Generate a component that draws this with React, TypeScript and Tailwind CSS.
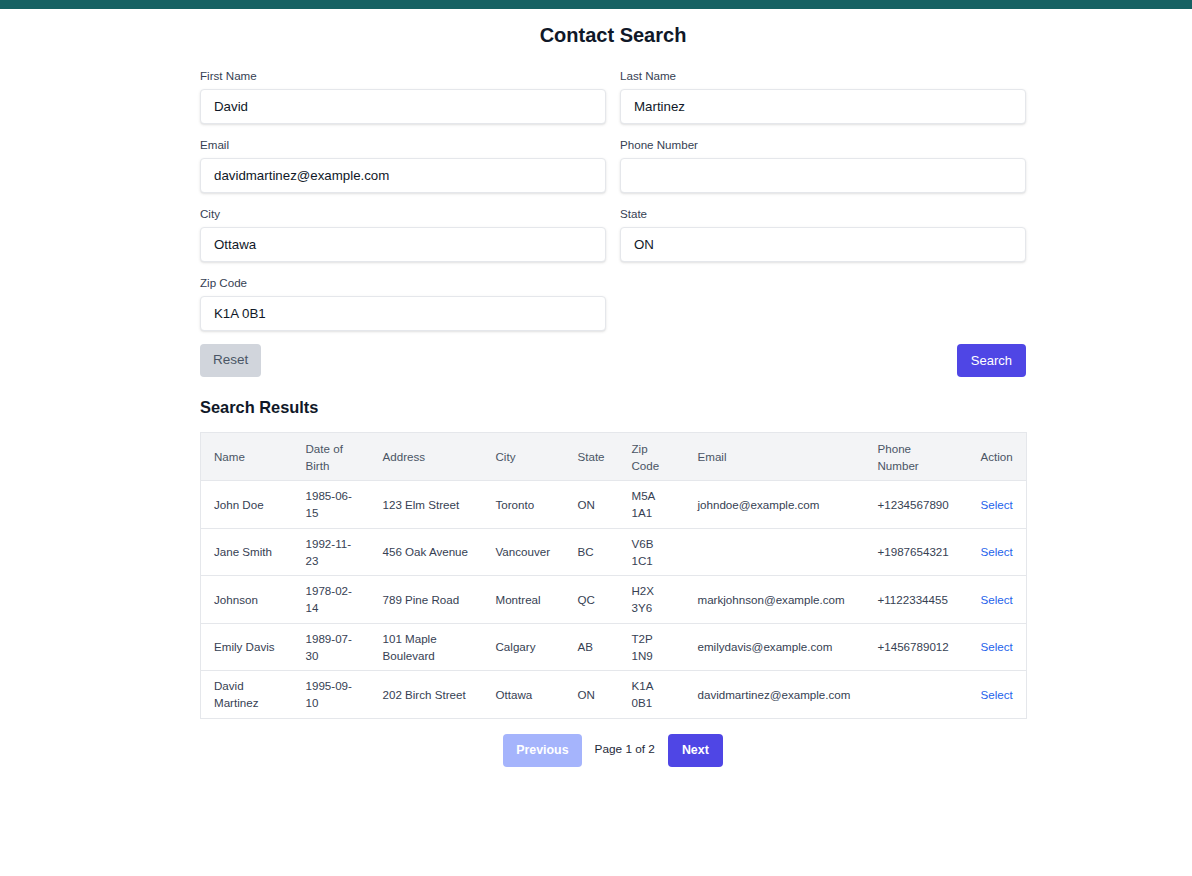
import { useState } from "react";

type Contact = {
  name: string;
  dob: string;
  address: string;
  city: string;
  state: string;
  zip: string;
  email: string;
  phone: string;
};

const contacts: Contact[] = [
  { name: "John Doe", dob: "1985-06-15", address: "123 Elm Street", city: "Toronto", state: "ON", zip: "M5A 1A1", email: "johndoe@example.com", phone: "+1234567890" },
  { name: "Jane Smith", dob: "1992-11-23", address: "456 Oak Avenue", city: "Vancouver", state: "BC", zip: "V6B 1C1", email: "", phone: "+1987654321" },
  { name: "Johnson", dob: "1978-02-14", address: "789 Pine Road", city: "Montreal", state: "QC", zip: "H2X 3Y6", email: "markjohnson@example.com", phone: "+1122334455" },
  { name: "Emily Davis", dob: "1989-07-30", address: "101 Maple Boulevard", city: "Calgary", state: "AB", zip: "T2P 1N9", email: "emilydavis@example.com", phone: "+1456789012" },
  { name: "David Martinez", dob: "1995-09-10", address: "202 Birch Street", city: "Ottawa", state: "ON", zip: "K1A 0B1", email: "davidmartinez@example.com", phone: "" },
];

const columns = [
  { label: "Name", w: "w-[92px]" },
  { label: "Date of Birth", w: "w-[77px]" },
  { label: "Address", w: "w-[113px]" },
  { label: "City", w: "w-[82px]" },
  { label: "State", w: "w-[54px]" },
  { label: "Zip Code", w: "w-[66px]" },
  { label: "Email", w: "w-[180px]" },
  { label: "Phone Number", w: "w-[103px]" },
  { label: "Action", w: "w-[59px]" },
];

function Field({ label, value }: { label: string; value: string }) {
  const [v, setV] = useState(value);
  return (
    <div className="flex flex-col">
      <label className="mb-[5px] text-[11.6px] leading-4 text-gray-700">{label}</label>
      <input
        value={v}
        onChange={(e) => setV(e.target.value)}
        className="h-[35px] rounded border border-gray-200 bg-white px-[13px] text-[13.3px] text-gray-900 shadow-sm outline-none"
      />
    </div>
  );
}

export default function App() {
  return (
    <div className="min-h-[876px] bg-white font-['Liberation_Sans',Arial,sans-serif] text-gray-900">
      <div className="h-[9px] bg-[#166163]" />
      <div className="ml-[200px] w-[826px] pt-[12px]">
        <h1 className="text-center text-[20px] font-bold leading-7 text-gray-900">Contact Search</h1>

        <div className="mt-[19px] grid grid-cols-2 gap-x-[14px] gap-y-[13px]">
          <Field label="First Name" value="David" />
          <Field label="Last Name" value="Martinez" />
          <Field label="Email" value="davidmartinez@example.com" />
          <Field label="Phone Number" value="" />
          <Field label="City" value="Ottawa" />
          <Field label="State" value="ON" />
          <Field label="Zip Code" value="K1A 0B1" />
        </div>

        <div className="mt-[13px] flex items-center justify-between">
          <button className="h-[33px] rounded bg-gray-300 px-[13px] text-[13.5px] text-gray-600">Reset</button>
          <button className="h-[33px] rounded bg-[#4f46e5] px-[14px] text-[13px] font-medium text-white">Search</button>
        </div>

        <h2 className="mt-[18px] text-[16.4px] font-bold leading-6 text-gray-900">Search Results</h2>

        <table className="mt-[13px] w-full table-fixed border-collapse border border-gray-200 text-[11.6px] leading-[17px]">
          <thead>
            <tr className="bg-gray-100 text-gray-600">
              {columns.map((c) => (
                <th key={c.label} className={`${c.w} h-[48px] px-[13px] text-left font-normal`}>
                  {c.label}
                </th>
              ))}
            </tr>
          </thead>
          <tbody className="text-gray-700">
            {contacts.map((c) => (
              <tr key={c.name} className="border-t border-gray-200">
                <td className="h-[47.5px] px-[13px]">{c.name}</td>
                <td className="px-[13px]">{c.dob}</td>
                <td className="px-[13px]">{c.address}</td>
                <td className="px-[13px]">{c.city}</td>
                <td className="px-[13px]">{c.state}</td>
                <td className="px-[13px]">{c.zip}</td>
                <td className="px-[13px]">{c.email}</td>
                <td className="px-[13px]">{c.phone}</td>
                <td className="px-[13px]">
                  <a className="cursor-pointer text-[#2563eb]">Select</a>
                </td>
              </tr>
            ))}
          </tbody>
        </table>

        <div className="mt-[15px] flex items-center justify-center gap-[13px]">
          <button disabled className="h-[33px] rounded bg-[#a5b4fc] px-[13px] text-[12.4px] font-bold text-white">
            Previous
          </button>
          <span className="text-[11.8px] text-gray-800">Page 1 of 2</span>
          <button className="h-[33px] rounded bg-[#4f46e5] px-[14px] text-[12.4px] font-bold text-white">Next</button>
        </div>
      </div>
    </div>
  );
}
